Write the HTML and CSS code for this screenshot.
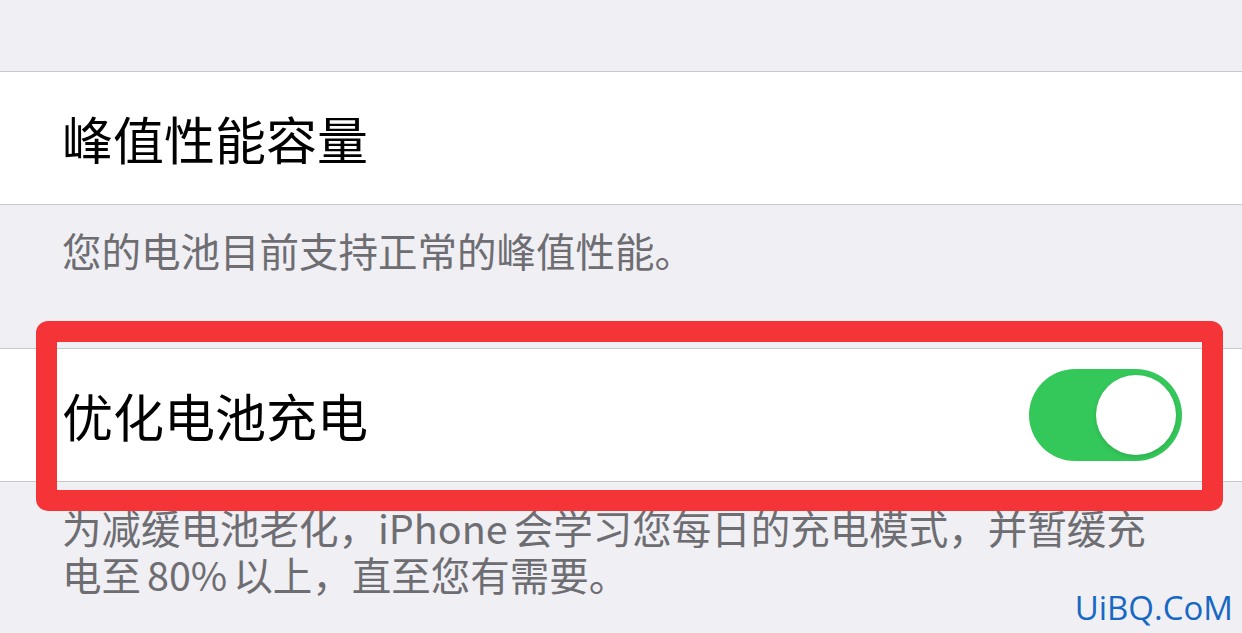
FILE: index.html
```html
<!DOCTYPE html>
<html lang="zh-CN">
<head>
  <meta charset="UTF-8">
  <meta name="viewport" content="width=device-width, initial-scale=1.0">
  <title>电池健康</title>
  <link rel="stylesheet" href="styles.css">
</head>
<body>
  <div class="top-gap"></div>

  <div class="cell">
    <span class="cell-title">峰值性能容量</span>
  </div>
  <p class="footer footer-single">您的电池目前支持正常的峰值性能。</p>

  <div class="cell">
    <span class="cell-title">优化电池充电</span>
    <div class="switch on">
      <div class="knob"></div>
    </div>
  </div>
  <p class="footer">为减缓电池老化，iPhone<span class="gap"></span>会学习您每日的充电模式，并暂缓充<br>电至<span class="gap"></span>80%<span class="gap"></span>以上，直至您有需要。</p>

  <!-- annotation drawn on top of the screenshot -->
  <div class="highlight"></div>
  <div class="watermark">UiBQ.CoM</div>
</body>
</html>
```

FILE: styles.css
```css
* {
  margin: 0;
  padding: 0;
  box-sizing: border-box;
}

body {
  font-family: "Noto Sans CJK SC", "Noto Sans", sans-serif;
  background-color: #efeff4;
  width: 1242px;
  height: 633px;
  overflow: hidden;
  position: relative;
}

.top-gap {
  height: 71px;
}

.cell {
  height: 134px;
  background-color: #ffffff;
  border-top: 1px solid #c8c7cc;
  border-bottom: 1px solid #c8c7cc;
  display: flex;
  align-items: center;
  justify-content: space-between;
  padding: 0 60px 0 62px;
}

.cell-title {
  font-size: 51px;
  color: #000;
  line-height: 1;
}

.footer {
  font-size: 39.5px;
  line-height: 47px;
  color: #6d6d72;
  padding: 21px 62px 0 62px;
}

.footer-single {
  height: 143px;
}

.gap {
  display: inline-block;
  width: 6px;
}

.switch {
  width: 153px;
  height: 92px;
  border-radius: 46px;
  background-color: #34c759;
  position: relative;
  padding: 6px;
  display: flex;
  justify-content: flex-end;
}

.knob {
  width: 80px;
  height: 80px;
  border-radius: 50%;
  background-color: #fff;
  box-shadow: 0 2px 4px rgba(0, 0, 0, 0.12);
}

.highlight {
  position: absolute;
  left: 36px;
  top: 321px;
  width: 1187px;
  height: 190px;
  border: 21px solid #f43437;
  border-radius: 12px;
}

.watermark {
  position: absolute;
  right: 9px;
  top: 585px;
  font-family: "Open Sans", sans-serif;
  font-size: 33px;
  color: #1768c4;
}
```
